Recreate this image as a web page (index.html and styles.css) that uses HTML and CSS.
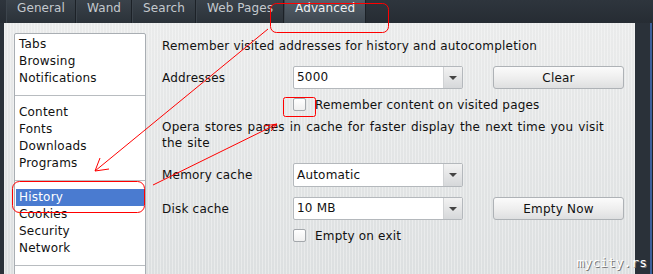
FILE: index.html
```html
<!DOCTYPE html>
<html lang="en">

<head>
	<meta charset="utf-8">
	<title>Preferences - Advanced - History</title>
	<link rel="stylesheet" href="styles.css">
</head>

<body>
	<div class="vindue">
		<nav class="faner">
			<span class="fane">General</span>
			<span class="fane">Wand</span>
			<span class="fane">Search</span>
			<span class="fane">Web Pages</span>
			<span class="fane aktiv">Advanced</span>
		</nav>

		<div class="panel">
			<ul class="liste">
				<li>Tabs</li>
				<li>Browsing</li>
				<li>Notifications</li>
				<li class="skille"></li>
				<li>Content</li>
				<li>Fonts</li>
				<li>Downloads</li>
				<li>Programs</li>
				<li class="skille"></li>
				<li class="valgt">History</li>
				<li>Cookies</li>
				<li>Security</li>
				<li>Network</li>
				<li class="skille"></li>
			</ul>

			<section class="indhold">
				<p class="overskrift">Remember visited addresses for history and autocompletion</p>

				<div class="raekke forste">
					<span class="etiket">Addresses</span>
					<span class="vaelger">5000<i class="pil"></i></span>
					<button class="knap">Clear</button>
				</div>

				<label class="flueben"><span class="boks"></span>Remember content on visited pages</label>

				<p class="tekst">Opera stores pages in cache for faster display the next time you visit the site</p>

				<div class="raekke hukommelse">
					<span class="etiket">Memory cache</span>
					<span class="vaelger">Automatic<i class="pil"></i></span>
				</div>

				<div class="raekke disk">
					<span class="etiket">Disk cache</span>
					<span class="vaelger">10 MB<i class="pil"></i></span>
					<button class="knap">Empty Now</button>
				</div>

				<label class="flueben sidste"><span class="boks"></span>Empty on exit</label>
			</section>
		</div>

		<span class="vandmaerke">mycity.rs</span>

		<!--røde markeringer ovenpå-->
		<svg class="noter" width="653" height="274" viewBox="0 0 653 274">
			<g fill="none" stroke="#f00" stroke-width="1">
				<rect x="270.5" y="3.5" width="118" height="29" rx="6" />
				<rect x="283.5" y="97.5" width="32" height="19" rx="2" />
				<rect x="12.5" y="181.5" width="132" height="31" rx="7" />
				<path d="M268 29 L95 171 M95 171 L100 158 M95 171 L109 169" />
				<path d="M153 185 L277 124 M277 124 L264 126 M277 124 L271 131" />
			</g>
		</svg>
	</div>
</body></html>
```

FILE: styles.css
```css
body {
	margin: 0;
	font-family: 'DejaVu Sans', sans-serif;
	font-size: 12px;
	letter-spacing: 0.2px;
	color: #111;
}

.vindue {
	position: relative;
	width: 653px;
	height: 274px;
	overflow: hidden;
	background: linear-gradient(90deg, #2a3139 0, #2a3139 650px, #3b5f9a 650px, #3b5f9a 652px, #222 652px);
}

.faner {
	display: flex;
	height: 23px;
	padding-left: 6px;
	background: linear-gradient(#2e353d, #262c33);
}

.fane {
	padding: 0 10px;
	line-height: 16px;
	letter-spacing: 0.1px;
	color: #c4c9ce;
	border-right: 1px solid #1c2127;
	border-left: 1px solid #3c444c;
	background: linear-gradient(#3a424a, #2b3239);
}

.fane.aktiv {
	color: #eef0f2;
	background: linear-gradient(#56606a, #3e4750);
}

.panel {
	display: flex;
	width: 611px;
	height: 241px;
	margin-left: 4px;
	padding: 10px;
	background:
		repeating-linear-gradient(90deg, rgba(255, 255, 255, 0.35) 0, rgba(255, 255, 255, 0.35) 1px, transparent 1px, transparent 3px),
		linear-gradient(#eaebeb, #dcdfe0);
}

.liste {
	list-style: none;
	margin: 0;
	padding: 2px 0 0;
	width: 130px;
	height: 260px;
	background: #fff;
	border: 1px solid #a9aeb3;
	border-radius: 2px;
}

.liste li {
	height: 17px;
	line-height: 17px;
	padding-left: 3px;
	margin: 0 1px;
}

.liste .skille {
	height: 0;
	margin: 8px 0;
	border-top: 1px solid #b8bcc0;
}

.liste .valgt {
	color: #fff;
	background: #4a7bd0;
}

.indhold {
	width: 462px;
	margin-left: 16px;
}

.overskrift {
	margin: 5px 0 0;
	line-height: 16px;
}

.raekke {
	display: flex;
	align-items: center;
	height: 23px;
}

.forste {
	margin-top: 12px;
}

.hukommelse {
	height: 24px;
	margin-top: 12px;
}

.disk {
	margin-top: 10px;
}

.etiket {
	width: 131px;
}

.vaelger {
	position: relative;
	box-sizing: border-box;
	width: 170px;
	height: 23px;
	line-height: 21px;
	padding-left: 3px;
	background: #fff;
	border: 1px solid #b4b8bc;
	border-radius: 2px;
}

.hukommelse .vaelger {
	height: 24px;
	line-height: 22px;
}

.pil {
	position: absolute;
	right: 0;
	top: 0;
	bottom: 0;
	width: 18px;
	background: linear-gradient(#f2f2f2, #d6d8da);
	border-left: 1px solid #d0d2d4;
}

.pil::after {
	content: "";
	position: absolute;
	left: 5px;
	top: 9px;
	border-left: 4px solid transparent;
	border-right: 4px solid transparent;
	border-top: 4px solid #444;
}

.knap {
	width: 131px;
	height: 23px;
	margin-left: 30px;
	padding: 0;
	font-family: inherit;
	font-size: 12px;
	letter-spacing: 0.2px;
	color: #111;
	background: linear-gradient(#fbfbfb, #ededed 55%, #dedfe0);
	border: 1px solid #aeb2b6;
	border-radius: 3px;
}

.flueben {
	display: flex;
	align-items: center;
	height: 13px;
	margin: 9px 0 0 131px;
}

.boks {
	width: 11px;
	height: 11px;
	margin-right: 9px;
	background: linear-gradient(#fff, #f0f0f0);
	border: 1px solid #a4a8ac;
	border-radius: 2px;
}

.tekst {
	margin: 8px 0 0;
	line-height: 16px;
	word-spacing: 1px;
}

.vandmaerke {
	position: absolute;
	right: 6px;
	bottom: 4px;
	font-family: 'DejaVu Sans Mono', monospace;
	font-size: 13px;
	letter-spacing: 0;
	color: #fff;
	text-shadow: 1px 1px 0 #777;
}

.noter {
	position: absolute;
	left: 0;
	top: 0;
	pointer-events: none;
}
```
